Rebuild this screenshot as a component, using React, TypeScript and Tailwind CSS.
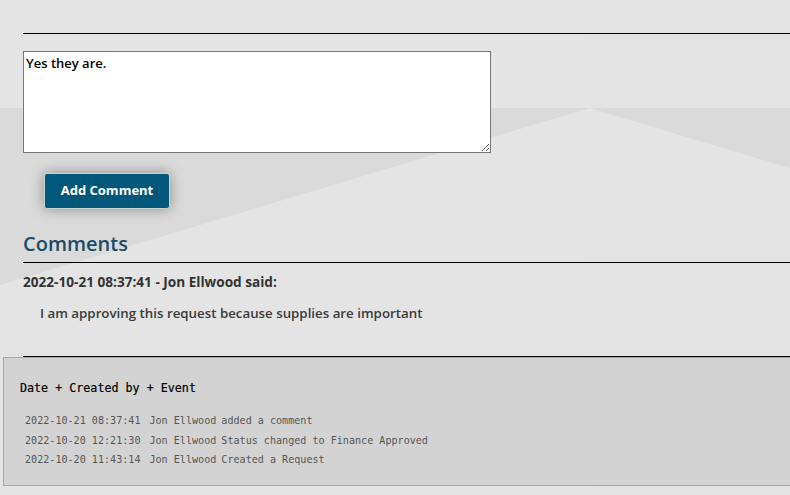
const logs = [
  { date: "2022-10-21 08:37:41", by: "Jon Ellwood", event: "added a comment" },
  { date: "2022-10-20 12:21:30", by: "Jon Ellwood", event: "Status changed to Finance Approved" },
  { date: "2022-10-20 11:43:14", by: "Jon Ellwood", event: "Created a Request" },
];

function Backdrop() {
  // faint geometric wallpaper behind the page
  return (
    <svg className="absolute inset-0 h-full w-full" preserveAspectRatio="none" viewBox="0 0 790 495">
      <rect width="790" height="495" fill="#e4e4e4" />
      <polygon points="0,108 790,108 790,168 590,108 0,285" fill="#dadada" />
      <rect x="590" y="0" width="200" height="108" fill="#e3e3e3" />
      <rect x="590" y="168" width="200" height="327" fill="#e3e3e3" />
    </svg>
  );
}

export default function App() {
  return (
    <div className="relative min-h-screen overflow-hidden font-['Open_Sans',sans-serif] text-[#333]">
      <Backdrop />
      <div className="relative pt-[33px]">
        <div className="ml-[23px] border-t border-black" />

        <div className="ml-[23px] mt-[17px]">
          <textarea
            className="block h-[102px] w-[468px] resize-y border border-[#767676] bg-white px-[2px] py-[1px] text-[13px] font-semibold leading-[20px] text-black outline-none"
            defaultValue="Yes they are."
          />
        </div>

        <button className="ml-[44px] mt-[20px] h-[36px] w-[126px] rounded-[3px] border border-[#c8d3d8] bg-[#02587a] text-[13px] font-bold text-white shadow-[0_0_14px_rgba(0,0,0,0.35)]">
          Add Comment
        </button>

        <h2 className="ml-[23px] mb-[5px] mt-[22px] text-[20px] font-semibold leading-[26px] text-[#1a4a66]">Comments</h2>
        <div className="ml-[23px] border-t border-black" />

        <p className="ml-[23px] mt-[10px] text-[13.6px] font-bold leading-[18px] text-[#333]">
          2022-10-21 08:37:41 - Jon Ellwood said:
        </p>
        <p className="ml-[40px] mt-[13px] text-[13.3px] font-semibold leading-[18px] text-[#3a3a3a]">
          I am approving this request because supplies are important
        </p>

        <div className="ml-[23px] mt-[34px] border-t border-black" />
        <div className="ml-[3px] h-[129px] border-b border-l border-t border-[#a8a8a8] bg-[#d3d3d3] pl-[16px] pt-[22px] font-['DejaVu_Sans_Mono',monospace]">
          <div className="text-[11.7px] leading-[16px] text-black [-webkit-text-stroke:0.2px_black]">Date + Created by + Event</div>
          <table className="mt-[15px] border-separate border-spacing-0 text-[10.1px] text-[#555]">
            <tbody>
              {logs.map((row) => (
                <tr key={row.date + row.event}>
                  <td className="h-[19.5px] pl-[5px] pr-[9px] align-middle">{row.date}</td>
                  <td className="pr-[5px] align-middle">{row.by}</td>
                  <td className="align-middle">{row.event}</td>
                </tr>
              ))}
            </tbody>
          </table>
        </div>
      </div>
    </div>
  );
}
